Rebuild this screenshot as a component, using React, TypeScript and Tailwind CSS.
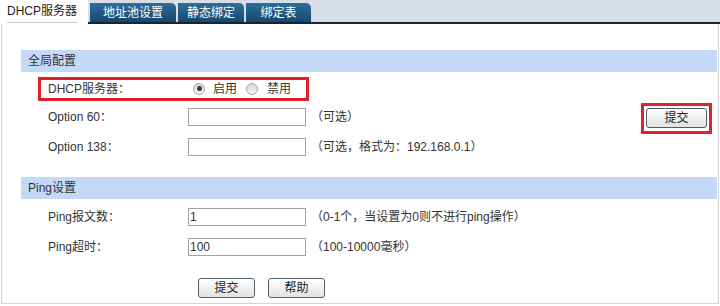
import React from 'react';

const font = "font-['Liberation_Sans','Noto_Sans_CJK_SC',sans-serif]";

function Radio({ checked }: { checked?: boolean }) {
  return (
    <span className="flex h-[12px] w-[12px] items-center justify-center rounded-full border border-[#a8a8a8] bg-linear-to-b from-[#d6d6d6] to-[#f6f6f6]">
      {checked && <span className="h-[5px] w-[5px] rounded-full bg-[#3a3a3a]" />}
    </span>
  );
}

function Btn({ label, w = 'w-[57px]' }: { label: string; w?: string }) {
  return (
    <button className={`${w} h-[20px] rounded-[3px] border border-[#4f5f6c] bg-linear-to-b from-white to-[#e2e2e2] text-[12px] leading-none text-[#222]`}>
      {label}
    </button>
  );
}

function Field({ value }: { value?: string }) {
  return (
    <div className="flex h-[18px] w-[118px] items-center border border-[#a3a3a3] bg-white px-[1px] text-[12px] text-[#333]">
      {value}
    </div>
  );
}

function SectionHead({ title }: { title: string }) {
  return (
    <div className="flex h-[22px] items-center bg-[#c3d9f7] pl-[7px] text-[12px] text-[#333]">{title}</div>
  );
}

function Row({ label, children }: { label: string; children: React.ReactNode }) {
  return (
    <div className="flex h-[30px] items-center text-[12px] text-[#333]">
      <div className="w-[167px] pl-[27px]">{label}</div>
      {children}
    </div>
  );
}

export default function App() {
  const tabs = [
    { name: '地址池设置', w: 'w-[86px]' },
    { name: '静态绑定', w: 'w-[66px]' },
    { name: '绑定表', w: 'w-[65px]' },
  ];

  return (
    <div className={`flex h-[306px] w-[720px] flex-col bg-white ${font}`}>
      {/* tab bar */}
      <div className="flex h-[24px] shrink-0">
        <div className="flex w-[88px] items-start bg-white pl-[7px] pt-[3px]">
          <span className="border-b border-[#c8c8c8] pb-[2px] text-[12px] leading-[17px] text-[#222]">DHCP服务器</span>
        </div>
        <div className="flex flex-1 items-end gap-[2px] border-b-2 border-[#16252f] bg-[#d8dee7] pl-[2px]">
          {tabs.map(t => (
            <div
              key={t.name}
              className={`${t.w} flex h-[19px] items-center justify-center rounded-tr-[5px] bg-linear-to-b from-[#2f6d99] to-[#144871] text-[12px] text-white`}
            >
              {t.name}
            </div>
          ))}
        </div>
      </div>

      {/* panel */}
      <div className="mx-[1px] mb-[2px] flex flex-1 flex-col border-x border-b border-[#d2d2d2] pl-[19px] pr-[1px] pt-[26px]">
        <SectionHead title="全局配置" />

        <div className="flex h-[30px] items-center pt-[3px] text-[12px] text-[#333]">
          <div className="ml-[17px] flex h-[24px] w-[271px] items-center border-[3px] border-[#e0202a] pl-[7px]">
            <span className="w-[145px]">DHCP服务器：</span>
            <Radio checked />
            <span className="ml-[8px] mr-[9px]">启用</span>
            <Radio />
            <span className="ml-[9px]">禁用</span>
          </div>
        </div>

        <div className="flex h-[30px] items-center text-[12px] text-[#333]">
          <div className="w-[167px] pl-[27px]">Option 60：</div>
          <Field />
          <span className="ml-[5px]">（可选）</span>
          <div className="ml-auto mr-[5px] mt-[2px] flex h-[31px] w-[71px] items-center justify-center border-[3px] border-[#e0202a]">
            <Btn label="提交" w="w-[61px]" />
          </div>
        </div>

        <Row label="Option 138：">
          <Field />
          <span className="ml-[5px]">（可选，格式为：192.168.0.1）</span>
        </Row>

        <div className="mt-[15px]">
          <SectionHead title="Ping设置" />
        </div>

        <div className="pt-[3px]">
          <Row label="Ping报文数：">
            <Field value="1" />
            <span className="ml-[5px]">（0-1个，当设置为0则不进行ping操作）</span>
          </Row>
          <Row label="Ping超时：">
            <Field value="100" />
            <span className="ml-[5px]">（100-10000毫秒）</span>
          </Row>
        </div>

        <div className="mt-[16px] flex gap-[13px] pl-[177px]">
          <Btn label="提交" />
          <Btn label="帮助" />
        </div>
      </div>
    </div>
  );
}
